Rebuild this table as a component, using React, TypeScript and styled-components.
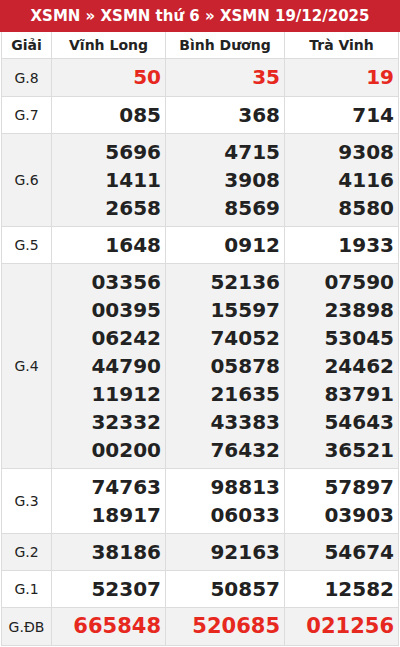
import React from 'react'
import styled, { createGlobalStyle } from 'styled-components'

const GlobalStyle = createGlobalStyle`
  body {
    margin: 0;
    background: #fff;
    font-family: "DejaVu Sans", "Liberation Sans", sans-serif;
  }
`

const Wrapper = styled.div`
  width: 400px;
`

const Title = styled.h2`
  margin: 0;
  height: 32px;
  line-height: 32px;
  background-color: #c8232f;
  color: #fff;
  font-size: 15px;
  font-weight: 700;
  text-align: center;
`

const Table = styled.table`
  width: 398px;
  margin: 0 1px;
  border-collapse: collapse;
  table-layout: fixed;
  color: #222;
`

const HeadCell = styled.th<{ $w?: number }>`
  width: ${(p) => (p.$w ? `${p.$w}px` : 'auto')};
  height: 26px;
  padding: 0;
  border: 1px solid #dcdcdc;
  border-top: none;
  font-size: 14px;
  font-weight: 700;
  text-align: center;
  background: #fff;
`

const Row = styled.tr<{ $gray: boolean }>`
  background-color: ${(p) => (p.$gray ? '#f2f2f2' : '#fff')};
`

const Label = styled.td`
  padding: 0;
  border: 1px solid #dcdcdc;
  font-size: 14px;
  text-align: center;
`

const NumCell = styled.td`
  padding: 4px 4px 4px 0;
  border: 1px solid #dcdcdc;
  text-align: right;
  vertical-align: middle;
`

const Num = styled.div<{ $red?: boolean; $big?: boolean }>`
  line-height: ${(p) => (p.$red ? '29px' : '28px')};
  font-size: ${(p) => (p.$big ? '21px' : '20px')};
  font-weight: 700;
  color: ${(p) => (p.$red ? '#e6281e' : '#222')};
`

const provinces = ['Vĩnh Long', 'Bình Dương', 'Trà Vinh']

const rows: { name: string; values: string[][] }[] = [
  { name: 'G.8', values: [['50'], ['35'], ['19']] },
  { name: 'G.7', values: [['085'], ['368'], ['714']] },
  {
    name: 'G.6',
    values: [
      ['5696', '1411', '2658'],
      ['4715', '3908', '8569'],
      ['9308', '4116', '8580'],
    ],
  },
  { name: 'G.5', values: [['1648'], ['0912'], ['1933']] },
  {
    name: 'G.4',
    values: [
      ['03356', '00395', '06242', '44790', '11912', '32332', '00200'],
      ['52136', '15597', '74052', '05878', '21635', '43383', '76432'],
      ['07590', '23898', '53045', '24462', '83791', '54643', '36521'],
    ],
  },
  {
    name: 'G.3',
    values: [
      ['74763', '18917'],
      ['98813', '06033'],
      ['57897', '03903'],
    ],
  },
  { name: 'G.2', values: [['38186'], ['92163'], ['54674']] },
  { name: 'G.1', values: [['52307'], ['50857'], ['12582']] },
  { name: 'G.ĐB', values: [['665848'], ['520685'], ['021256']] },
]

const App = () => {
  return (
    <Wrapper>
      <GlobalStyle />
      <Title>XSMN » XSMN thứ 6 » XSMN 19/12/2025</Title>
      <Table>
        <thead>
          <tr>
            <HeadCell $w={49}>Giải</HeadCell>
            <HeadCell $w={113}>{provinces[0]}</HeadCell>
            <HeadCell $w={118}>{provinces[1]}</HeadCell>
            <HeadCell>{provinces[2]}</HeadCell>
          </tr>
        </thead>
        <tbody>
          {rows.map((row, i) => (
            <Row key={row.name} $gray={i % 2 === 0}>
              <Label>{row.name}</Label>
              {row.values.map((list, j) => (
                <NumCell key={j}>
                  {list.map((n, k) => (
                    <Num
                      key={k}
                      $red={row.name === 'G.8' || row.name === 'G.ĐB'}
                      $big={row.name === 'G.ĐB'}
                    >
                      {n}
                    </Num>
                  ))}
                </NumCell>
              ))}
            </Row>
          ))}
        </tbody>
      </Table>
    </Wrapper>
  )
}

export default App
